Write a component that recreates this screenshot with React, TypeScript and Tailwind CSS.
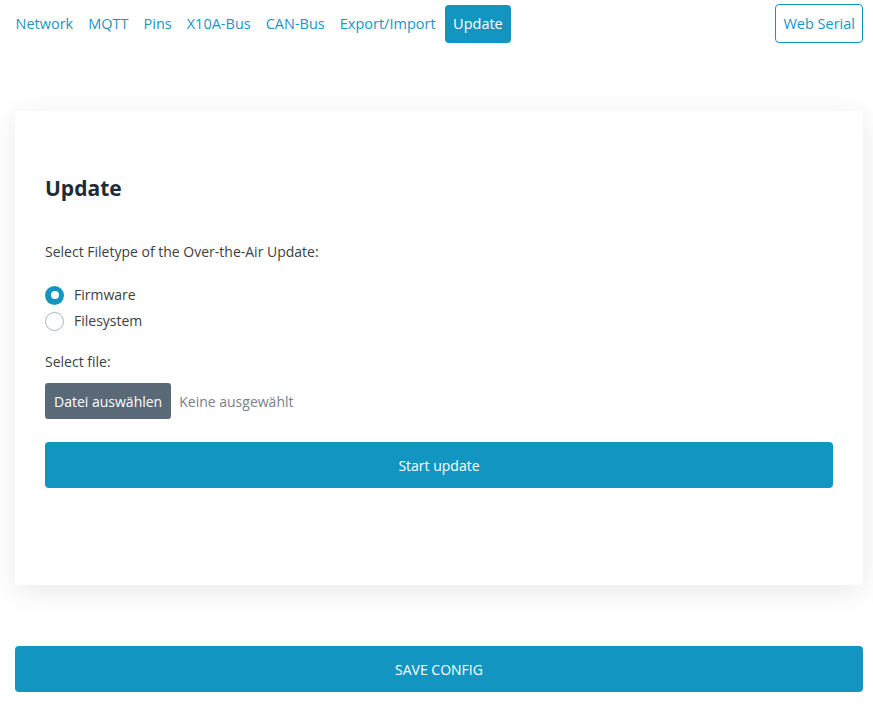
import React from "react";

const navItems = ["Network", "MQTT", "Pins", "X10A-Bus", "CAN-Bus", "Export/Import"];

export default function App() {
  return (
    <div className="h-[707px] overflow-hidden bg-white text-[#212529]" style={{ fontFamily: '"Open Sans", "Noto Sans", sans-serif' }}>
      <nav className="flex items-center justify-between pt-1 pl-2 pr-[10px]">
        <div className="flex items-center">
          {navItems.map((n) => (
            <a key={n} className="px-[7.5px] py-[8px] text-[14.5px] leading-[22px] text-[#1b95c4]">
              {n}
            </a>
          ))}
          <a className="ml-[2px] rounded-[4px] bg-[#1296c1] px-2 py-2 text-[14.5px] leading-[22px] text-white">Update</a>
        </div>
        <a className="rounded-[4px] border border-[#1296c1] px-[7px] py-[7px] text-[14.5px] leading-[23px] text-[#1b95c4]">Web Serial</a>
      </nav>

      <div className="pl-[15px] pr-[10px] pt-[68px]">
        <div className="rounded-[4px] bg-white px-[30px] pt-[62px] pb-[97px] shadow-[0_6px_30px_rgba(0,0,0,0.09)]">
          <h2 className="text-[21px] font-bold leading-[30px] text-[#212b36]">Update</h2>
          <p className="mt-[38px] text-[14px] leading-[22px] text-[#3a3f44]">Select Filetype of the Over-the-Air Update:</p>
          <div className="mt-[21px] flex flex-col gap-[4px]">
            <label className="flex items-center gap-[10px] text-[14px] leading-[22px] text-[#3a3f44]">
              <span className="flex h-[19px] w-[19px] items-center justify-center rounded-full bg-[#1296c1]">
                <span className="h-[8px] w-[8px] rounded-full bg-white" />
              </span>
              Firmware
            </label>
            <label className="flex items-center gap-[10px] text-[14px] leading-[22px] text-[#3a3f44]">
              <span className="h-[19px] w-[19px] rounded-full border border-[#adb5bd] bg-white" />
              Filesystem
            </label>
          </div>
          <p className="mt-[19px] text-[14px] leading-[22px] text-[#3a3f44]">Select file:</p>
          <div className="mt-[10px] flex items-center gap-2">
            <span className="flex h-[36px] items-center rounded-[3px] bg-[#5a6977] px-[9px] text-[14px] text-white">Datei auswählen</span>
            <span className="text-[14px] text-[#7a8087]">Keine ausgewählt</span>
          </div>
          <button className="mt-[23px] flex h-[46px] w-full items-center justify-center rounded-[4px] bg-[#1296c1] text-[14px] text-white">
            Start update
          </button>
        </div>
      </div>

      <div className="pl-[15px] pr-[10px] pt-[61px]">
        <button className="flex h-[46px] w-full items-center justify-center rounded-[4px] bg-[#1296c1] text-[14px] uppercase text-white">
          Save Config
        </button>
      </div>
    </div>
  );
}
